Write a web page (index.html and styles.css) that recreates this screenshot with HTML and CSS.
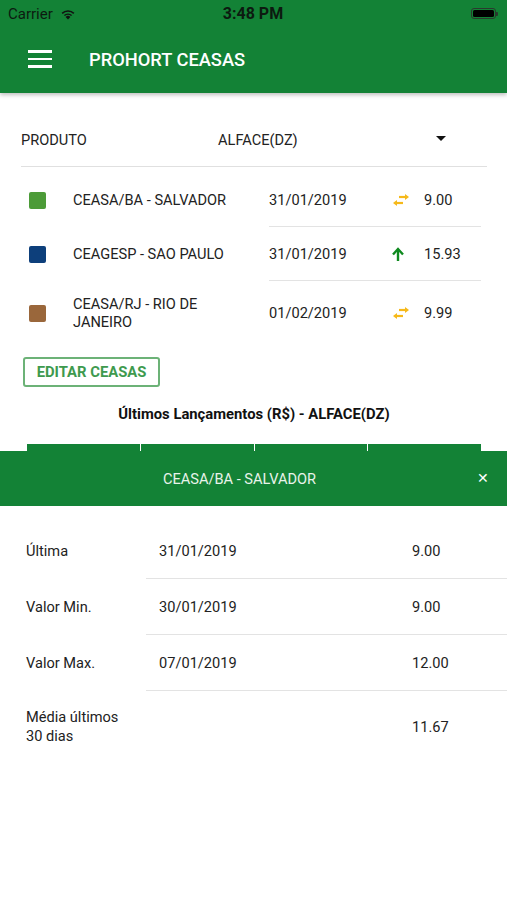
FILE: index.html
```html
<!DOCTYPE html>
<html lang="pt">
<head>
    <meta charset="UTF-8">
    <meta name="viewport" content="width=device-width, initial-scale=1.0">
    <title>Prohort Ceasas</title>
    <link rel="stylesheet" href="styles.css">
</head>
<body>
    <header class="app-header">
        <div class="status-bar">
            <div class="status-left">
                <span>Carrier</span>
                <svg class="wifi" width="16" height="12" viewBox="0 0 16 12">
                    <path d="M8 11.5 L5.6 8.9 A3.6 3.6 0 0 1 10.4 8.9 Z" fill="#111"/>
                    <path d="M3.9 7.1 A5.9 5.9 0 0 1 12.1 7.1 L11.1 8.1 A4.5 4.5 0 0 0 4.9 8.1 Z" fill="#111"/>
                    <path d="M1.6 4.8 A9.2 9.2 0 0 1 14.4 4.8 L13.3 5.9 A7.7 7.7 0 0 0 2.7 5.9 Z" fill="#111"/>
                </svg>
            </div>
            <div class="status-time">3:48 PM</div>
            <div class="status-right">
                <div class="battery"><div class="battery-fill"></div></div>
                <div class="battery-tip"></div>
            </div>
        </div>
        <div class="toolbar">
            <div class="menu-icon">
                <span></span><span></span><span></span>
            </div>
            <h1 class="toolbar-title">PROHORT CEASAS</h1>
        </div>
    </header>

    <main class="content">
        <div class="product-row">
            <div class="product-label">PRODUTO</div>
            <div class="product-value">ALFACE(DZ)</div>
            <div class="caret"></div>
        </div>

        <div class="ceasa-list">
            <div class="ceasa-row">
                <div class="ceasa-left">
                    <span class="swatch swatch-green"></span>
                    <span class="ceasa-name">CEASA/BA - SALVADOR</span>
                </div>
                <div class="ceasa-right">
                    <span class="ceasa-date">31/01/2019</span>
                    <svg class="trend" width="20" height="14" viewBox="0 0 20 14">
                        <path d="M8 4 H16" stroke="#f6b91a" stroke-width="2.2"/>
                        <path d="M14 1 L18 4 L14 7 Z" fill="#f6b91a"/>
                        <path d="M4 10 H12" stroke="#f6b91a" stroke-width="2.2"/>
                        <path d="M6 7 L2 10 L6 13 Z" fill="#f6b91a"/>
                    </svg>
                    <span class="ceasa-price">9.00</span>
                </div>
            </div>
            <div class="ceasa-row">
                <div class="ceasa-left">
                    <span class="swatch swatch-blue"></span>
                    <span class="ceasa-name">CEAGESP - SAO PAULO</span>
                </div>
                <div class="ceasa-right">
                    <span class="ceasa-date">31/01/2019</span>
                    <svg class="trend" width="20" height="14" viewBox="0 0 20 14">
                        <path d="M7 14 V3" stroke="#0f8a1f" stroke-width="2.4"/>
                        <path d="M2 7.5 L7 2 L12 7.5" stroke="#0f8a1f" stroke-width="2.4" fill="none"/>
                    </svg>
                    <span class="ceasa-price">15.93</span>
                </div>
            </div>
            <div class="ceasa-row">
                <div class="ceasa-left">
                    <span class="swatch swatch-brown"></span>
                    <span class="ceasa-name">CEASA/RJ - RIO DE JANEIRO</span>
                </div>
                <div class="ceasa-right">
                    <span class="ceasa-date">01/02/2019</span>
                    <svg class="trend" width="20" height="14" viewBox="0 0 20 14">
                        <path d="M8 4 H16" stroke="#f6b91a" stroke-width="2.2"/>
                        <path d="M14 1 L18 4 L14 7 Z" fill="#f6b91a"/>
                        <path d="M4 10 H12" stroke="#f6b91a" stroke-width="2.2"/>
                        <path d="M6 7 L2 10 L6 13 Z" fill="#f6b91a"/>
                    </svg>
                    <span class="ceasa-price">9.99</span>
                </div>
            </div>
        </div>

        <button class="edit-btn">EDITAR CEASAS</button>

        <h2 class="chart-title">Últimos Lançamentos (R$) - ALFACE(DZ)</h2>

        <div class="chart-top">
            <span></span><span></span><span></span><span></span>
        </div>
    </main>

    <section class="detail-panel">
        <div class="detail-header">
            <span class="detail-title">CEASA/BA - SALVADOR</span>
            <span class="detail-close">✕</span>
        </div>
        <div class="detail-list">
            <div class="detail-row">
                <div class="detail-label">Última</div>
                <div class="detail-right">
                    <span class="detail-date">31/01/2019</span>
                    <span class="detail-value">9.00</span>
                </div>
            </div>
            <div class="detail-row">
                <div class="detail-label">Valor Min.</div>
                <div class="detail-right">
                    <span class="detail-date">30/01/2019</span>
                    <span class="detail-value">9.00</span>
                </div>
            </div>
            <div class="detail-row">
                <div class="detail-label">Valor Max.</div>
                <div class="detail-right">
                    <span class="detail-date">07/01/2019</span>
                    <span class="detail-value">12.00</span>
                </div>
            </div>
            <div class="detail-row">
                <div class="detail-label">Média últimos 30 dias</div>
                <div class="detail-right">
                    <span class="detail-date"></span>
                    <span class="detail-value">11.67</span>
                </div>
            </div>
        </div>
    </section>
</body>
</html>
```

FILE: styles.css
```css
* {
    box-sizing: border-box;
    margin: 0;
    padding: 0;
    font-family: Roboto, 'Liberation Sans', sans-serif;
}

body {
    background-color: #fff;
    width: 507px;
    height: 900px;
    overflow: hidden;
    color: #222;
}

/* Header */
.app-header {
    background-color: #138236;
    height: 93px;
    box-shadow: 0 2px 4px rgba(0, 0, 0, 0.25);
    position: relative;
    z-index: 2;
}

.status-bar {
    height: 27px;
    display: flex;
    align-items: center;
    justify-content: space-between;
    padding: 0 9px 0 8px;
    font-size: 15px;
    color: #0c1a10;
}

.status-left {
    display: flex;
    align-items: center;
    gap: 7px;
    width: 120px;
}

.status-time {
    font-weight: 700;
    font-size: 16px;
}

.status-right {
    width: 120px;
    display: flex;
    justify-content: flex-end;
    align-items: center;
}

.battery {
    width: 25px;
    height: 11px;
    border: 1px solid #2a3a2e;
    border-radius: 3px;
    padding: 1px;
}

.battery-fill {
    background-color: #000;
    width: 100%;
    height: 100%;
    border-radius: 1.5px;
}

.battery-tip {
    width: 2px;
    height: 4px;
    background-color: #2a3a2e;
    border-radius: 0 1px 1px 0;
}

.toolbar {
    height: 64px;
    display: flex;
    align-items: center;
    padding-left: 28px;
}

.menu-icon {
    display: flex;
    flex-direction: column;
    gap: 5px;
    width: 24px;
    margin-right: 37px;
}

.menu-icon span {
    display: block;
    height: 2.5px;
    background-color: #fff;
}

.toolbar-title {
    color: #fff;
    font-size: 18.3px;
    font-weight: 500;
}

/* Main */
.content {
    padding: 0 20px 0 21px;
}

.product-row {
    margin-top: 21px;
    height: 53px;
    display: flex;
    align-items: center;
    border-bottom: 1px solid #e0e0e0;
    font-size: 14.6px;
    color: #222;
}

.product-label {
    width: 197px;
}

.product-value {
    flex-grow: 1;
}

.caret {
    width: 0;
    height: 0;
    border-left: 5px solid transparent;
    border-right: 5px solid transparent;
    border-top: 5px solid #111;
    margin-right: 41px;
    margin-bottom: 4px;
}

.ceasa-list {
    margin-top: 6px;
}

.ceasa-row {
    display: flex;
    font-size: 14.6px;
    color: #222;
}

.ceasa-left {
    width: 248px;
    display: flex;
    align-items: center;
    padding-left: 8px;
}

.swatch {
    width: 17px;
    height: 17px;
    border-radius: 2px;
    margin-right: 27px;
    flex-shrink: 0;
}

.swatch-green { background-color: #4c9b38; }
.swatch-blue { background-color: #0d3f7b; }
.swatch-brown { background-color: #9a673b; }

.ceasa-name {
    width: 170px;
    line-height: 18px;
}

.ceasa-right {
    width: 212px;
    height: 54px;
    display: flex;
    align-items: center;
    border-bottom: 1px solid #e3e3e3;
}

.ceasa-row:last-child .ceasa-right {
    border-bottom: none;
    height: 64px;
}

.ceasa-date {
    width: 122px;
}

.trend {
    margin-right: 13px;
}

.edit-btn {
    display: block;
    margin: 12px 0 0 2px;
    width: 137px;
    height: 30px;
    background-color: #fff;
    border: 2px solid #6cb277;
    border-radius: 3px;
    color: #3e9a4e;
    font-size: 14.8px;
    font-weight: 700;
    cursor: pointer;
}

.chart-title {
    text-align: center;
    font-size: 14.8px;
    font-weight: 700;
    color: #111;
    margin-top: 17px;
    line-height: 20px;
}

.chart-top {
    margin: 20px 6px 0 6px;
    height: 7px;
    display: flex;
    gap: 1px;
    background-color: #fff;
}

.chart-top span {
    flex: 1;
    background-color: #138236;
}

/* Detail panel */
.detail-header {
    height: 55px;
    background-color: #138236;
    display: flex;
    align-items: center;
    justify-content: center;
    position: relative;
    padding-right: 28px;
    color: #e8f3ea;
    font-size: 14.6px;
}

.detail-close {
    position: absolute;
    right: 18px;
    top: 19px;
    font-size: 14px;
    color: #fff;
}

.detail-list {
    margin-top: 17px;
}

.detail-row {
    display: flex;
    font-size: 14.6px;
    color: #222;
}

.detail-label {
    width: 146px;
    padding-left: 26px;
    padding-right: 20px;
    display: flex;
    align-items: center;
    line-height: 19px;
}

.detail-right {
    flex-grow: 1;
    height: 56px;
    display: flex;
    align-items: center;
    padding-left: 13px;
    border-bottom: 1px solid #e3e3e3;
}

.detail-row:last-child .detail-right {
    border-bottom: none;
    height: 72px;
}

.detail-date {
    width: 253px;
}
```
